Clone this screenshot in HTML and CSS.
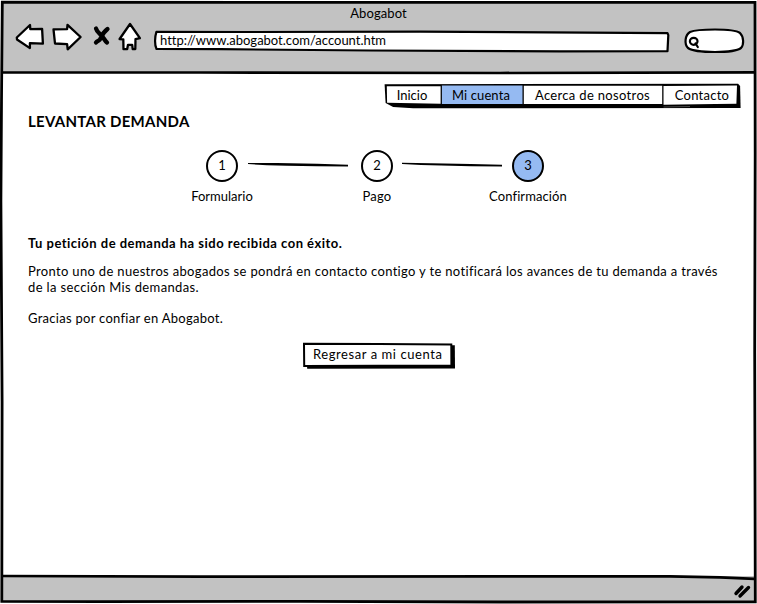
FILE: index.html
```
<!DOCTYPE html>
<html lang="es">
<head>
<meta charset="utf-8">
<title>Abogabot</title>
<link rel="stylesheet" href="styles.css">
</head>
<body>
<div class="window">
  <header class="chrome">
    <div class="title"><span>Abogabot</span></div>
    <div class="toolbar">
      <svg class="nav-icons" width="130" height="32" viewBox="14 20 130 32">
        <g fill="#fff" stroke="#000" stroke-width="2.300" stroke-linejoin="round">
          <path d="M16.800 37.500 30 25l.3 4.200 11.800-.3.800 14.700-13-.4v4.900L17 39.500Z"/>
          <path d="m53.500 29.300 13.600-.2.400-4.300L80.600 37 67.700 49.300l-.6-5.200-12.100-.6Z"/>
          <path d="m130 24 9.900 14.200-4.400 1-.2 9.900-2.600-.1-.5-4.200h-4.200l-.8 4.200-3.700.1-.2-9.800-3.700-.3Z"/>
        </g>
        <path d="M96 28.500c1 4 4 5 6 7.500s3 5 5 6.500M107.500 29c-4 3-6 7-7 9.500s-3 2-4.500 4" fill="none" stroke="#000" stroke-width="4.300" stroke-linecap="round"/>
      </svg>
      <div class="address">
        <svg class="shape" width="518" height="24" viewBox="153 29 518 24"><path d="M156.400 31.800 250 32l170-.4 247.500 1.500.8 2-.8 16L560 51.300l-190-.8-150-1.300-63.500-.2c-2-4-1.800-12-.1-17.200Z" fill="#fff" stroke="#000" stroke-width="2.200" stroke-linejoin="round"/></svg>
        <span>http://www.abogabot.com/account.htm</span>
      </div>
      <svg class="search" width="64" height="28" viewBox="682 27 64 28">
        <path d="M690 32c7-3 43-4 50 1 4 4 4 12 1 15-4 3-15 4-26 4-13 0-22-.5-27-4-4-4-3-13 2-16Z" fill="#fff" stroke="#000" stroke-width="2.200"/>
        <ellipse cx="693.700" cy="41.300" rx="3.800" ry="3.500" fill="none" stroke="#000" stroke-width="2.200"/>
        <path d="m695.500 43.500 2.300 3.500" stroke="#000" stroke-width="2.200" stroke-linecap="round"/>
      </svg>
    </div>
  </header>
  <main class="page">
    <nav class="tabs">
      <svg class="shape" width="357" height="26" viewBox="384 83 357 26">
        <path d="m384.600 84.200 1 18.800 7.500 4 20 1.200 327.500-.2-.5-22-2-2.200Z"/>
        <path d="m386.800 86.300.3 16.500 53.500 1V86.300Z" fill="#fff"/>
        <path d="M441.900 85.500h80.600v18.400h-80.600Z" fill="#95baf2"/>
        <path d="M523.800 85.700h138.400V104H523.800ZM663.500 85.900 737 85.500l-.6 18.300-21.400.2-51.500.7Z" fill="#fff"/>
        <path d="M663.500 107 690 106.500" stroke="#777" stroke-width=".6"/>
      </svg>
      <a class="tab home">Inicio</a><a class="tab account">Mi cuenta</a><a class="tab about">Acerca de nosotros</a><a class="tab contact">Contacto</a>
    </nav>
    <h1><span>LEVANTAR DEMANDA</span></h1>
    <ol class="steps">
      <li class="step"><b>1</b><span class="s1">Formulario</span></li>
      <li class="line"><svg width="102" height="6" viewBox="0 0 102 6"><path d="M1 .9 30 1.100l40 .7 31 1v1.800L70 4.300 40 3.700 20 3.200 1 2.100Z"/></svg></li>
      <li class="step"><b>2</b><span class="s2">Pago</span></li>
      <li class="line"><svg width="102" height="6" viewBox="0 0 102 6"><path d="M1 .8 30 1.200l40 .9 31 .7v1.700L70 4.300 40 3.600 20 2.900 1 1.900Z"/></svg></li>
      <li class="step active"><b>3</b><span class="s3">Confirmación</span></li>
    </ol>
    <section class="message">
      <h2>Tu petición de demanda ha sido recibida con éxito.</h2>
      <p class="l1">Pronto uno de nuestros abogados se pondrá en contacto contigo y te notificará los avances de tu demanda a través</p>
      <p class="l2">de la sección Mis demandas.</p>
      <p class="l3">Gracias por confiar en Abogabot.</p>
    </section>
    <button class="back">
      <svg class="shape" width="153" height="27" viewBox="302 342 153 27"><path d="m306 345 148.800.2.2 23.400-147.800.1Z"/><path d="m304 343.700 75 .2 72.300.6.1 20.900-72 .4-75.200.1Z" fill="#fff" stroke="#000" stroke-width="2"/></svg>
      <span>Regresar a mi cuenta</span>
    </button>
  </main>
  <footer class="status">
    <svg width="18" height="16" viewBox="734 583 18 16"><path d="m737 593.500 6-6.500M741 596l8.500-8.500" stroke="#000" stroke-width="3.400" stroke-linecap="round"/></svg>
  </footer>
  <svg class="frame" width="757" height="604" viewBox="0 0 757 604" fill="none" stroke="#000">
    <path d="M2.300 2.200 250 2.400l505 0 .2 150-.5 200 .6 249.400-255 .2-200-.6-200 .3-98.500-.4.3-200-1.200-200 .6-100Z" stroke-width="2.800"/>
    <path d="M2 72.500h198l300 .5 255-.7" stroke-width="2.700"/>
    <path d="m2 576 198 .6 300-.3 170 .1 50 1 34.500 1.500" stroke-width="2.700"/>
  </svg>
</div>
</body>
</html>
```
FILE: styles.css
```
* { box-sizing: border-box; }
body { margin: 0; background: #fff; color: #000; font: 13px/16px Lato, "Open Sans", sans-serif; font-variant-ligatures: none; }
h1, h2, p, ol { margin: 0; padding: 0; }
.window { position: relative; width: 757px; height: 604px; padding: 2px; display: grid; grid-template-rows: 70px 1fr 26px; overflow: hidden; white-space: nowrap; }
.frame { position: absolute; inset: 0; pointer-events: none; }
.chrome { background: #c2c2c2; }
.title { height: 18px; padding-top: 3px; text-align: center; letter-spacing: .1px; }
.toolbar { display: flex; padding-left: 12px; }
.nav-icons { flex: none; }
.address { position: relative; width: 518px; height: 24px; margin: 9px 0 0 9px; padding: 3px 0 0 7px; }
.address span, .tab, .back span { position: relative; }
.shape { position: absolute; left: 0; top: 0; }
.search { margin: 7px 0 0 11px; }
.page { padding: 11px 26px 0; display: flex; flex-direction: column; }
.tabs { position: relative; align-self: flex-end; width: 357px; height: 26px; margin-right: -12px; display: grid; grid-template-columns: 56px 82px 141px 78px; padding-top: 4px; text-align: center; }
.account { letter-spacing: .1px; }
.about { letter-spacing: .33px; }
.contact { letter-spacing: .25px; }
h1 { height: 21px; font-size: 15px; line-height: 22px; padding-top: 1px; letter-spacing: .27px; }
.steps { list-style: none; display: grid; grid-template-columns: 82px 73px 82px 69px 82px; margin: 20px 0 0 153px; height: 57px; }
.step { display: flex; flex-direction: column; align-items: center; }
.step b { width: 32px; height: 32px; border: 2px solid #000; border-radius: 50%; font-weight: 400; text-align: center; line-height: 27px; }
.step span { margin-top: 6px; }
.s2 { letter-spacing: .2px; }
.s3 { letter-spacing: .1px; }
.active b { background: #95baf2; }
.line { display: flex; justify-content: center; padding: 12px 4px 0 0; }
.line + .step ~ .line { padding-right: 2px; }
.line svg { flex: none; }
.message { margin-top: 28px; }
h2 { font-size: 13px; line-height: 16px; margin-bottom: 12px; letter-spacing: .48px; }
.l1 { letter-spacing: .33px; }
.l2 { margin-bottom: 15px; letter-spacing: .36px; }
.l3 { letter-spacing: .28px; }
.back { position: relative; width: 153px; height: 27px; margin: 16px 0 0 274px; padding: 0 0 3px 11px; border: 0; background: none; font: inherit; color: #000; text-align: left; letter-spacing: .57px; }
.status { background: #c2c2c2; display: flex; justify-content: flex-end; padding: 7px 4px 0 0; }
```
